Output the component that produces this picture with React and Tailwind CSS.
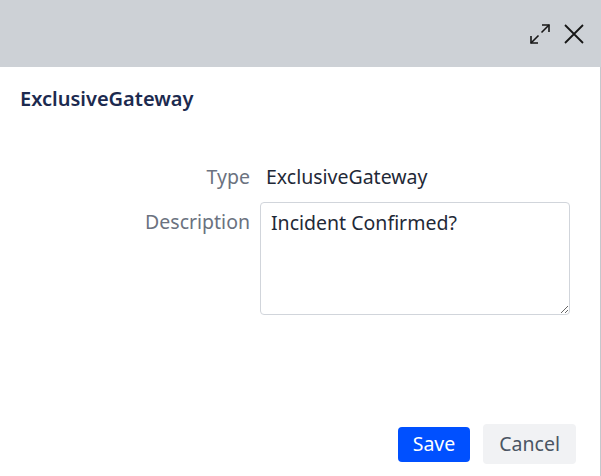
import React from 'react';

function ExpandIcon() {
  return (
    <svg width="24" height="24" viewBox="0 0 24 24" fill="none" stroke="#161616" strokeWidth="1.6">
      <path d="M14 3h7v7" />
      <path d="M21 3l-7.5 7.5" />
      <path d="M10 21H3v-7" />
      <path d="M3 21l7.5-7.5" />
    </svg>
  );
}

function CloseIcon() {
  return (
    <svg width="24" height="24" viewBox="0 0 24 24" fill="none" stroke="#161616" strokeWidth="1.8">
      <path d="M3 3l18 18M21 3L3 21" />
    </svg>
  );
}

export default function App() {
  return (
    <div className="w-[601px] h-[476px] flex flex-col bg-white overflow-hidden"
      style={{ fontFamily: '"Noto Sans", "Open Sans", sans-serif' }}>
      {/* header */}
      <div className="h-[67px] bg-[#cdd1d6] flex items-center justify-end gap-[10px] pr-[15px] shrink-0">
        <ExpandIcon />
        <CloseIcon />
      </div>

      <div className="flex-1 flex flex-col border-r border-[#c4c8cd]">
        <h1 className="pl-[20px] pt-[18px] text-[20px] font-semibold text-[#1c2a4f] leading-[27px]">ExclusiveGateway</h1>

        <div className="mt-[52px] grid grid-cols-[250px_310px] gap-x-[10px] gap-y-[12px] text-[19.5px] leading-[26px]">
          <div className="text-right text-[#6b7280]">Type</div>
          <div className="pl-[6px] text-[#1f2937]">ExclusiveGateway</div>
          <div className="text-right text-[#6b7280] pt-[7px]">Description</div>
          <textarea
            className="h-[113px] w-[310px] rounded-[4px] border border-[#d1d5db] px-[10px] py-[7px] text-[#1f2937] outline-none resize-y"
            defaultValue="Incident Confirmed?"
          />
        </div>

        <div className="mt-auto mb-[12px] flex justify-end items-center gap-[13px] pr-[24px]">
          <button className="h-[35px] px-[15px] rounded-[4px] bg-[#0050ff] text-white text-[19.5px]">Save</button>
          <button className="h-[40px] px-[16px] rounded-[4px] bg-[#f1f2f4] text-[#4b5563] text-[19.5px]">Cancel</button>
        </div>
      </div>
    </div>
  );
}
